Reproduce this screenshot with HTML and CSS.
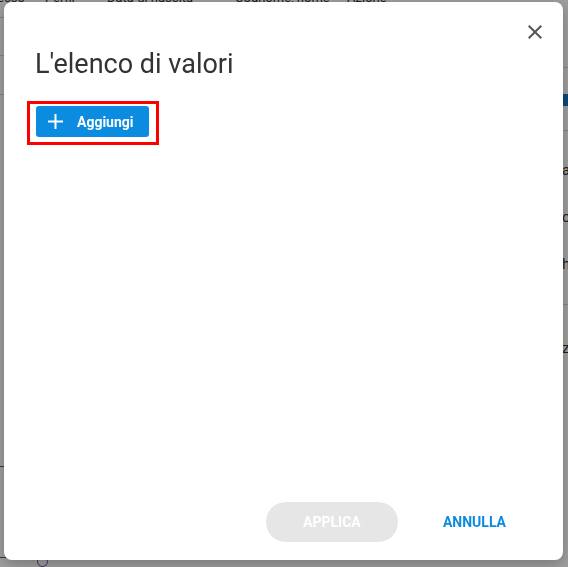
FILE: index.html
```html
<!DOCTYPE html>
<html lang="it">
<head>
<meta charset="utf-8">
<title>L'elenco di valori</title>
<link rel="stylesheet" href="styles.css">
</head>
<body>
<div class="page">
  <div class="thead">
    <span class="th th-1">Sesso</span>
    <span class="th th-2">Perfil</span>
    <span class="th th-3">Data di nascita</span>
    <span class="th th-4">Cognome, nome</span>
    <span class="th th-5">Azione</span>
  </div>
  <div class="cols">
    <div class="col-left">
      <div class="row r1"></div>
      <div class="row r2"></div>
      <div class="row r3"></div>
      <div class="left-fill"></div>
      <div class="row purple r4"></div>
      <div class="row purple r5"></div>
      <div class="circle-row"><span class="circle"></span></div>
    </div>
    <div class="col-mid"></div>
    <div class="col-right">
      <div class="row ra"></div>
      <div class="row rb"><span class="blue-chip"></span></div>
      <div class="row rc">
        <div class="rline">attivo</div>
        <div class="rline">ok</div>
        <div class="rline">home</div>
      </div>
      <div class="rline rz">zona</div>
    </div>
  </div>
</div>

<div class="overlay">
  <div class="dialog" role="dialog" aria-labelledby="dlg-title">
    <div class="close-row">
      <button class="close-btn" aria-label="Chiudi">
        <svg viewBox="0 0 24 24" width="24" height="24"><path d="M19 6.41 17.59 5 12 10.59 6.41 5 5 6.41 10.59 12 5 17.59 6.41 19 12 13.41 17.59 19 19 17.59 13.41 12z" fill="#555"/></svg>
      </button>
    </div>
    <h2 class="title" id="dlg-title">L'elenco di valori</h2>
    <div class="highlight">
      <button class="add-btn">
        <svg class="plus" viewBox="0 0 15 15" width="15" height="15"><path d="M6.5 0h2v6.5H15v2H8.5V15h-2V8.5H0v-2h6.5z" fill="#fff"/></svg>
        <span>Aggiungi</span>
      </button>
    </div>
    <div class="spacer"></div>
    <div class="footer">
      <button class="btn btn-apply" disabled>APPLICA</button>
      <button class="btn btn-cancel">ANNULLA</button>
    </div>
  </div>
</div>
</body>
</html>
```

FILE: styles.css
```css
html, body {
  margin: 0;
  padding: 0;
  height: 100%;
  overflow: hidden;
}
body {
  font-family: Roboto, "Liberation Sans", Arial, sans-serif;
  background: #fff;
  color: #333;
}

/* background page */
.page {
  height: 100%;
  display: flex;
  flex-direction: column;
  overflow: hidden;
}
.thead {
  height: 6px;
  overflow: hidden;
  display: flex;
  align-items: flex-end;
  font-size: 13px;
  color: #333;
}
.th {
  line-height: 13px;
  white-space: nowrap;
  overflow: hidden;
}
.th-1 { width: 25px; direction: rtl; }
.th-2 { width: 62px; margin-left: 20px; }
.th-3 { width: 128px; }
.th-4 { width: 112px; }
.th-5 { width: 60px; }

.cols {
  flex: 1;
  display: flex;
}
.col-left {
  width: 200px;
  display: flex;
  flex-direction: column;
}
.row {
  border-bottom: 1px solid #d6d6d6;
  box-sizing: border-box;
}
.r1 { height: 14px; }
.r2 { height: 38px; }
.r3 { height: 39px; }
.left-fill { height: 371px; }
.purple { border-bottom-color: #6a4c9c; }
.r4 { height: 1px; }
.r5 { height: 91px; }
.circle-row {
  padding-left: 37px;
}
.circle {
  display: block;
  width: 9px;
  height: 9px;
  border: 1px solid #6a4c9c;
  border-radius: 50%;
  margin-top: -2px;
}
.col-mid { flex: 1; }
.col-right {
  width: 30px;
  padding-left: 24px;
  box-sizing: border-box;
  display: flex;
  flex-direction: column;
  font-size: 15px;
  color: #333;
  overflow: hidden;
}
.ra { height: 64px; }
.rb {
  height: 63px;
  padding-top: 26px;
}
.blue-chip {
  display: block;
  width: 6px;
  height: 12px;
  background: #1173c0;
}
.rc {
  height: 174px;
  padding-top: 16px;
}
.rline {
  line-height: 47px;
  white-space: nowrap;
  overflow: hidden;
}
.rz { margin-top: 20px; }

/* modal */
.overlay {
  position: fixed;
  inset: 0;
  background: rgba(0, 0, 0, 0.38);
  display: flex;
  padding: 2px 5px 7px 4px;
  box-sizing: border-box;
}
.dialog {
  flex: 1;
  background: #fff;
  border-radius: 8px;
  box-shadow: 0 4px 14px rgba(0, 0, 0, 0.25);
  display: flex;
  flex-direction: column;
}
.close-row {
  display: flex;
  justify-content: flex-end;
  padding: 18px 16px 0 0;
}
.close-btn {
  width: 24px;
  height: 24px;
  padding: 0;
  border: 0;
  background: none;
  display: block;
  cursor: pointer;
}
.close-btn svg { display: block; }
.title {
  margin: 4px 0 0 31px;
  font-size: 27px;
  line-height: 32px;
  font-weight: 400;
  color: #333;
}
.highlight {
  align-self: flex-start;
  margin: 21px 0 0 23px;
  border: 3px solid #ff0000;
  padding: 2px 7px 5px 6px;
  display: flex;
}
.add-btn {
  height: 31px;
  width: 113px;
  border: 0;
  border-radius: 3px;
  background: #0b8ce0;
  color: #fff;
  display: flex;
  align-items: center;
  padding: 0 0 0 12px;
  gap: 14px;
  font-family: Roboto, "Liberation Sans", Arial, sans-serif;
  font-size: 14px;
  font-weight: 700;
  cursor: pointer;
}
.plus { display: block; }
.spacer { flex: 1; }
.footer {
  display: flex;
  justify-content: flex-end;
  gap: 8px;
  padding: 0 20px 18px 0;
}
.btn {
  height: 40px;
  border: 0;
  border-radius: 20px;
  padding: 0 37px;
  font-family: Roboto, "Liberation Sans", Arial, sans-serif;
  font-size: 14px;
  font-weight: 700;
  background: none;
}
.btn-apply {
  width: 132px;
  background: #e6e6e6;
  color: #fff;
}
.btn-cancel {
  color: #0b8ce0;
  cursor: pointer;
}
```
